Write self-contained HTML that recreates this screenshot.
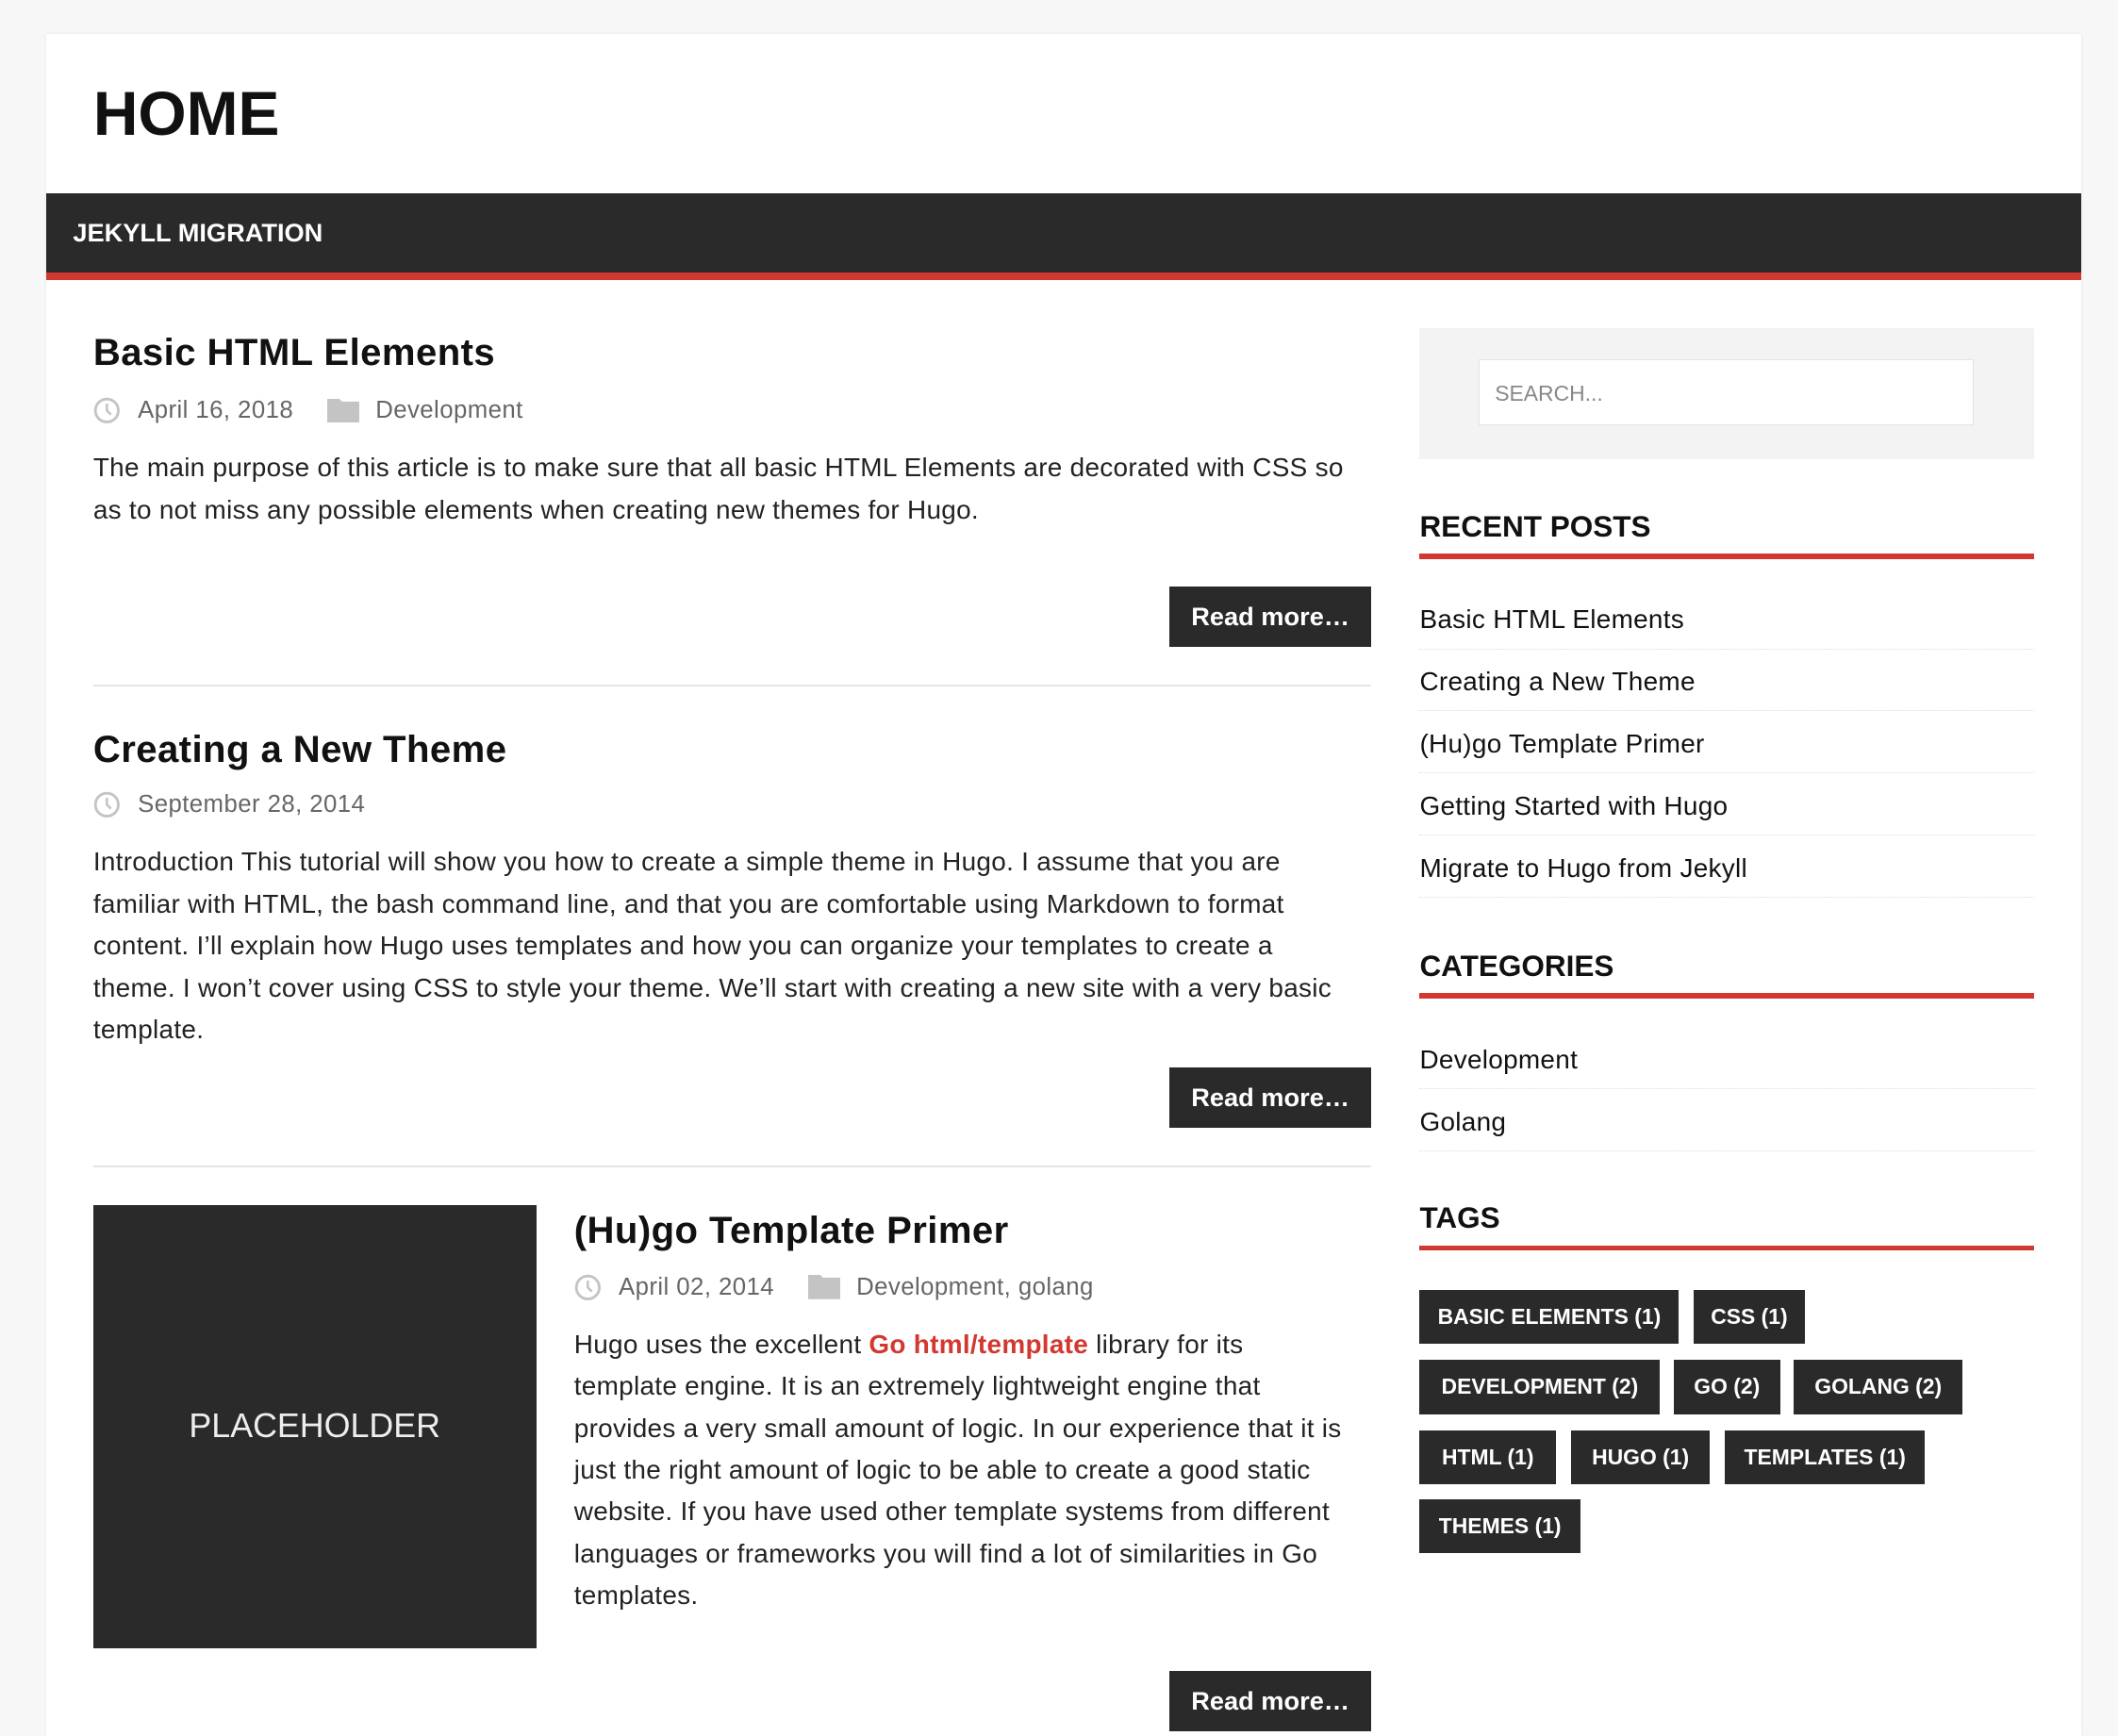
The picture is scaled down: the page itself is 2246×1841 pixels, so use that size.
<!DOCTYPE html>
<html><head><meta charset="utf-8"><style>
html{zoom:1.4324}
body{margin:0;background:#f7f7f7;font-family:"Liberation Sans",sans-serif;color:#111;width:1568px;height:1268px;overflow:hidden;position:relative}
.wrap{position:absolute;left:34px;top:25px;width:1507px;height:1260px;background:#fff;box-shadow:0 0 2px rgba(0,0,0,.08)}
.a{position:absolute;white-space:nowrap}
h1{position:absolute;left:35px;top:32px;margin:0;font-size:46px;font-weight:bold;letter-spacing:0}
.nav{position:absolute;left:0;top:118px;width:1507px;height:59px;background:#2a2a2a;border-bottom:6px solid #d2382f}
.nav span{position:absolute;left:20px;top:18px;color:#fff;font-weight:bold;font-size:19px}
.t{font-size:28px;font-weight:bold;letter-spacing:.3px}
.m{font-size:18px;color:#666;letter-spacing:.3px}
.p{font-size:19.5px;line-height:31px;color:#222;letter-spacing:.2px}
.btn{position:absolute;background:#2a2a2a;color:#fff;font-weight:bold;font-size:19px;width:149px;height:45px;line-height:45px;text-align:center}
.hr{position:absolute;left:35px;width:946px;height:1px;background:#e5e5e5}
.wh{font-size:22px;font-weight:bold}
.rl{position:absolute;left:1017px;width:455px;height:4px;background:#d2382f}
.li{position:absolute;left:1017px;width:455px;height:45px;border-bottom:1px dotted #ddd;font-size:19.5px;line-height:47px;color:#111;letter-spacing:.2px}
.tag{position:absolute;background:#2a2a2a;color:#fff;font-weight:bold;font-size:16px;height:40px;line-height:40px;text-align:center}
</style></head><body>
<div class="wrap">
<h1>HOME</h1>
<div class="nav"><span>JEKYLL MIGRATION</span></div>

<div class="a t" style="left:35px;top:221px">Basic HTML Elements</div>
<svg class="a" style="left:35px;top:269px" width="20" height="20" viewBox="0 0 20 20"><circle cx="10" cy="10" r="8.5" fill="none" stroke="#c4c4c4" stroke-width="2"/><path d="M10 5v5l3 3" fill="none" stroke="#c4c4c4" stroke-width="1.8"/></svg>
<div class="a m" style="left:68px;top:269px">April 16, 2018</div>
<svg class="a" style="left:208px;top:270px" width="24" height="18" viewBox="0 0 24 18"><path d="M0 0h9l2 2h13v16H0z" fill="#c4c4c4"/></svg>
<div class="a m" style="left:244px;top:269px">Development</div>
<div class="a p" style="left:35px;top:306px">The main purpose of this article is to make sure that all basic HTML Elements are decorated with CSS so<br>as to not miss any possible elements when creating new themes for Hugo.</div>
<div class="btn" style="left:832px;top:409px">Read more…</div>
<div class="hr" style="top:482px"></div>

<div class="a t" style="left:35px;top:515px">Creating a New Theme</div>
<svg class="a" style="left:35px;top:561px" width="20" height="20" viewBox="0 0 20 20"><circle cx="10" cy="10" r="8.5" fill="none" stroke="#c4c4c4" stroke-width="2"/><path d="M10 5v5l3 3" fill="none" stroke="#c4c4c4" stroke-width="1.8"/></svg>
<div class="a m" style="left:68px;top:561px">September 28, 2014</div>
<div class="a p" style="left:35px;top:598px">Introduction This tutorial will show you how to create a simple theme in Hugo. I assume that you are<br>familiar with HTML, the bash command line, and that you are comfortable using Markdown to format<br>content. I’ll explain how Hugo uses templates and how you can organize your templates to create a<br>theme. I won’t cover using CSS to style your theme. We’ll start with creating a new site with a very basic<br>template.</div>
<div class="btn" style="left:832px;top:765px">Read more…</div>
<div class="hr" style="top:838px"></div>

<div class="a" style="left:35px;top:867px;width:328px;height:328px;background:#2a2a2a;color:#eee;font-size:25px;text-align:center;line-height:328px">PLACEHOLDER</div>
<div class="a t" style="left:391px;top:871px">(Hu)go Template Primer</div>
<svg class="a" style="left:391px;top:918px" width="20" height="20" viewBox="0 0 20 20"><circle cx="10" cy="10" r="8.5" fill="none" stroke="#c4c4c4" stroke-width="2"/><path d="M10 5v5l3 3" fill="none" stroke="#c4c4c4" stroke-width="1.8"/></svg>
<div class="a m" style="left:424px;top:918px">April 02, 2014</div>
<svg class="a" style="left:564px;top:919px" width="24" height="18" viewBox="0 0 24 18"><path d="M0 0h9l2 2h13v16H0z" fill="#c4c4c4"/></svg>
<div class="a m" style="left:600px;top:918px">Development, golang</div>
<div class="a p" style="left:391px;top:955px">Hugo uses the excellent <b style="color:#d2382f">Go html/template</b> library for its<br>template engine. It is an extremely lightweight engine that<br>provides a very small amount of logic. In our experience that it is<br>just the right amount of logic to be able to create a good static<br>website. If you have used other template systems from different<br>languages or frameworks you will find a lot of similarities in Go<br>templates.</div>
<div class="btn" style="left:832px;top:1212px">Read more…</div>

<div class="a" style="left:1017px;top:218px;width:455px;height:97px;background:#f3f3f3"></div>
<div class="a" style="left:1061px;top:241px;width:366px;height:49px;background:#fff;border:1px solid #e3e3e3;font-size:16px;color:#888;line-height:49px;padding-left:11px;box-sizing:border-box">SEARCH...</div>

<div class="a wh" style="left:1017px;top:352px">RECENT POSTS</div>
<div class="rl" style="top:385px"></div>
<div class="li" style="top:410px">Basic HTML Elements</div>
<div class="li" style="top:456px">Creating a New Theme</div>
<div class="li" style="top:502px">(Hu)go Template Primer</div>
<div class="li" style="top:548px">Getting Started with Hugo</div>
<div class="li" style="top:594px">Migrate to Hugo from Jekyll</div>

<div class="a wh" style="left:1017px;top:677px">CATEGORIES</div>
<div class="rl" style="top:710px"></div>
<div class="li" style="top:736px">Development</div>
<div class="li" style="top:782px">Golang</div>

<div class="a wh" style="left:1017px;top:864px">TAGS</div>
<div class="rl" style="top:897px"></div>
<div class="tag" style="left:1017px;top:930px;width:192px">BASIC ELEMENTS (1)</div>
<div class="tag" style="left:1220px;top:930px;width:82px">CSS (1)</div>
<div class="tag" style="left:1017px;top:982px;width:178px">DEVELOPMENT (2)</div>
<div class="tag" style="left:1205px;top:982px;width:79px">GO (2)</div>
<div class="tag" style="left:1294px;top:982px;width:125px">GOLANG (2)</div>
<div class="tag" style="left:1017px;top:1034px;width:101px">HTML (1)</div>
<div class="tag" style="left:1129px;top:1034px;width:103px">HUGO (1)</div>
<div class="tag" style="left:1243px;top:1034px;width:148px">TEMPLATES (1)</div>
<div class="tag" style="left:1017px;top:1085px;width:119px">THEMES (1)</div>
</div>
</body></html>
